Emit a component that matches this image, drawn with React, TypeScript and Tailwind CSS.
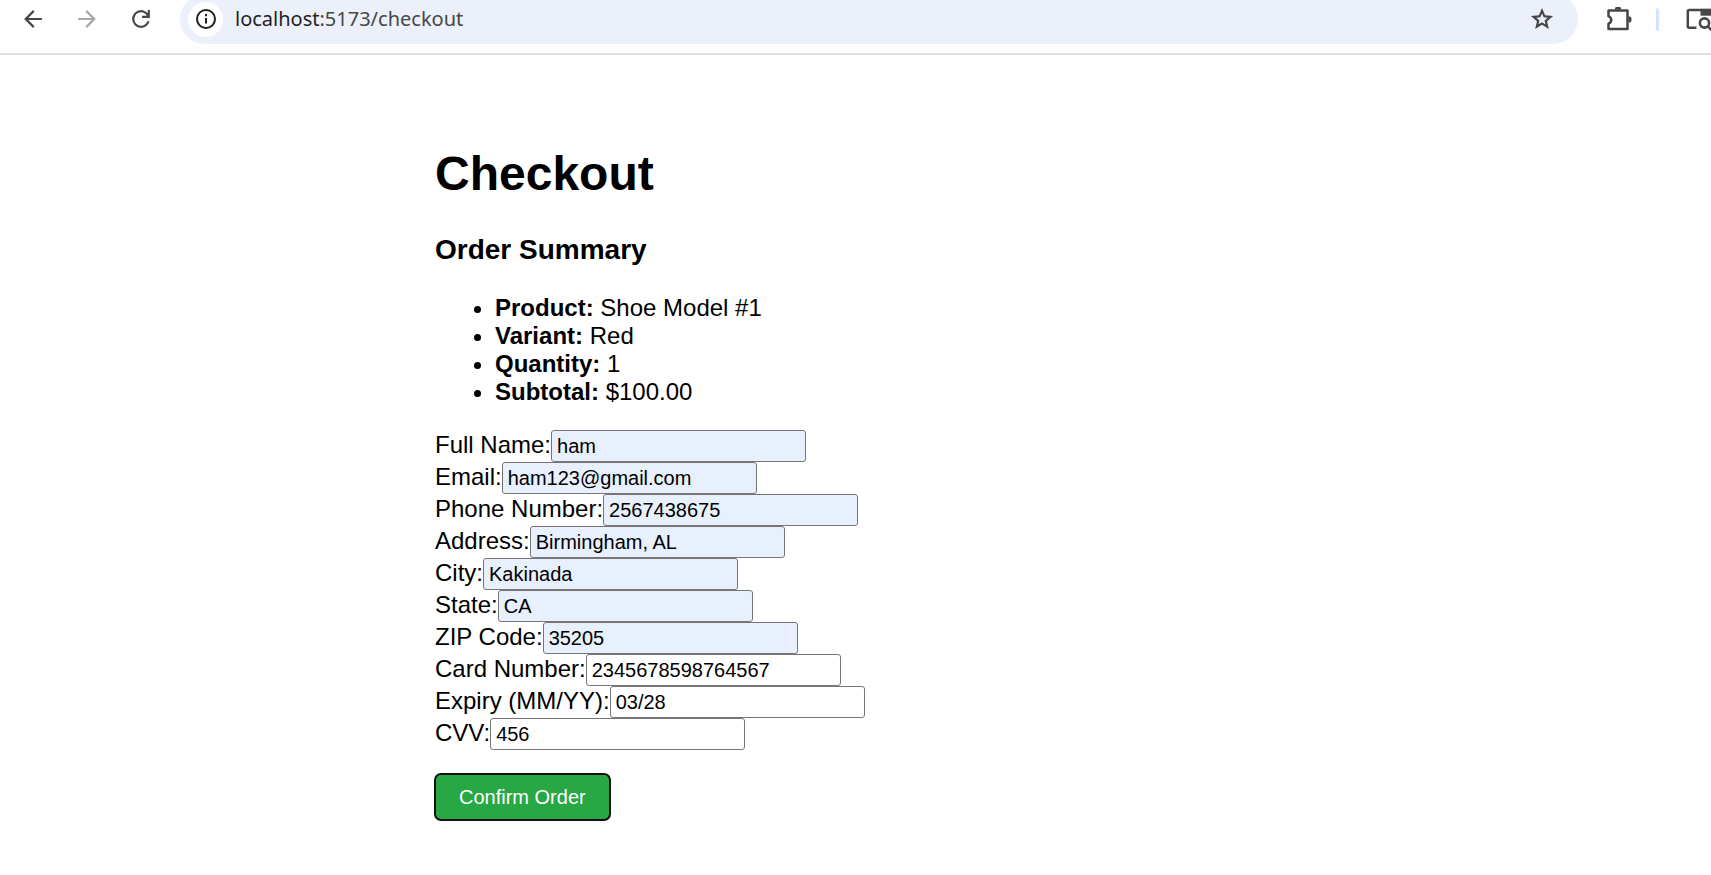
import { useState, type ReactNode } from "react";

type Field = {
  id: string;
  label: string;
  value: string;
  type?: string;
  autofilled?: boolean;
};

const summary = [
  { label: "Product:", value: "Shoe Model #1" },
  { label: "Variant:", value: "Red" },
  { label: "Quantity:", value: "1" },
  { label: "Subtotal:", value: "$100.00" },
];

const fields: Field[] = [
  { id: "fullName", label: "Full Name:", value: "ham", autofilled: true },
  { id: "email", label: "Email:", value: "ham123@gmail.com", type: "email", autofilled: true },
  { id: "phone", label: "Phone Number:", value: "2567438675", type: "tel", autofilled: true },
  { id: "address", label: "Address:", value: "Birmingham, AL", autofilled: true },
  { id: "city", label: "City:", value: "Kakinada", autofilled: true },
  { id: "state", label: "State:", value: "CA", autofilled: true },
  { id: "zip", label: "ZIP Code:", value: "35205", autofilled: true },
  { id: "card", label: "Card Number:", value: "2345678598764567" },
  { id: "expiry", label: "Expiry (MM/YY):", value: "03/28" },
  { id: "cvv", label: "CVV:", value: "456" },
];

function IconButton({ label, children }: { label: string; children: ReactNode }) {
  return (
    <button type="button" aria-label={label} className="flex h-6 min-w-6 shrink-0 items-center justify-center">
      {children}
    </button>
  );
}

function Glyph({ d }: { d: string }) {
  return (
    <svg width="24" height="24" viewBox="1.2 1.2 21.6 21.6" fill="currentColor">
      <path d={d} />
    </svg>
  );
}

function BrowserBar() {
  return (
    <header className="flex h-[55px] items-end overflow-hidden border-b-2 border-[#e1e1e1] bg-white pb-[9px] font-['Noto_Sans','Open_Sans',sans-serif]">
      <div className="flex h-[50px] w-full items-center">
        <nav aria-label="Browser" className="flex w-[180px] shrink-0 items-center gap-[30px] pl-[21px] text-[#474747]">
          <IconButton label="Back">
            <Glyph d="M20 11H7.830l5.590-5.590L12 4l-8 8 8 8 1.410-1.410L7.830 13H20z" />
          </IconButton>
          <span className="flex text-[#a9a9a9]">
            <IconButton label="Forward">
              <Glyph d="M4 11h12.170l-5.590-5.590L12 4l8 8-8 8-1.410-1.410L16.170 13H4z" />
            </IconButton>
          </span>
          <IconButton label="Reload">
            <Glyph d="M12 20q-3.350 0-5.675-2.325T4 12t2.325-5.675T12 4q1.725 0 3.300.713T18 6.750V4h2v7h-7V9h4.200q-.8-1.400-2.187-2.200T12 6Q9.500 6 7.750 7.750T6 12t1.750 4.250T12 18q1.925 0 3.475-1.100T17.650 14h2.100q-.7 2.650-2.850 4.325T12 20" />
          </IconButton>
        </nav>

        <div className="flex h-[50px] min-w-0 flex-1 items-center rounded-full bg-[#ebf0fa] pr-6 pl-2">
          <button
            type="button"
            aria-label="View site information"
            className="flex size-[35px] shrink-0 items-center justify-center rounded-full bg-white text-[#1f1f1f]"
          >
            <svg width="22" height="22" viewBox="0 0 22 22" fill="none" stroke="currentColor" strokeWidth="2">
              <circle cx="11" cy="11" r="9" />
              <path d="M11 10v5.500M11 6v2.200" />
            </svg>
          </button>
          <a href="/checkout" className="ml-3 flex-1 truncate text-xl text-[#474747]">
            <span className="text-[#1f1f1f]">localhost</span>:5173/checkout
          </a>
          <IconButton label="Bookmark this tab">
            <span className="text-[#474747]">
              <Glyph d="m8.850 16.825 3.150-1.900 3.150 1.925-.825-3.600 2.775-2.400-3.650-.325-1.450-3.400-1.450 3.375-3.650.325 2.775 2.425zM5.825 21l1.625-7.025L2 9.250l7.200-.625L12 2l2.800 6.625 7.200.625-5.450 4.725L18.175 21 12 17.275z" />
            </span>
          </IconButton>
        </div>

        <div className="flex w-[133px] shrink-0 items-center overflow-hidden pl-7 text-[#474747]">
          <IconButton label="Extensions">
            <svg width="26" height="26" viewBox="0 0 26 26" className="shrink-0">
              <path
                d="M2.500 4.500h19v18.400h-19v-5.200c3.600-1.600 3.600-5.900 0-7.500z"
                fill="none"
                stroke="currentColor"
                strokeWidth="2.500"
                strokeLinejoin="round"
              />
              <path d="M8.800 3.600a3.200 3.200 0 0 1 6.400 0zM22.400 10.300a3.200 3.200 0 0 1 0 6.400z" fill="currentColor" />
            </svg>
          </IconButton>
          <span className="ml-6 h-[23px] w-[3px] shrink-0 rounded-full bg-[#d3e3fd]" />
          <span className="ml-[27px] flex">
            <IconButton label="Search tabs">
              <svg width="28" height="24" viewBox="0 0 28 24" fill="none" stroke="currentColor" className="shrink-0">
                <path d="M10.500 20.800H3.300a1.500 1.500 0 0 1-1.500-1.500V4.500A1.500 1.500 0 0 1 3.300 3H26" strokeWidth="2.500" />
                <path d="M14.500 1.900H28v6.800H14.500z" fill="currentColor" stroke="none" />
                <circle cx="18.500" cy="16" r="4.600" strokeWidth="2.600" />
                <path d="m21.900 19.400 5 5" strokeWidth="2.600" />
              </svg>
            </IconButton>
          </span>
        </div>
      </div>
    </header>
  );
}

export default function App() {
  const [values, setValues] = useState<Record<string, string>>(
    Object.fromEntries(fields.map((f) => [f.id, f.value])),
  );

  return (
    <div className="min-h-screen bg-white text-black">
      <BrowserBar />
      <main className="mx-auto w-full max-w-[901px] px-[30px] pt-[91px] pb-[30px] font-['Liberation_Sans',Arial,sans-serif] text-2xl leading-7">
        <h1 className="text-5xl leading-[56px] font-bold">Checkout</h1>
        <h3 className="mt-8 text-[28px] leading-8 font-bold">Order Summary</h3>
        <ul className="mt-7 list-disc pl-[60px]">
          {summary.map((item) => (
            <li key={item.label}>
              <strong>{item.label}</strong> {item.value}
            </li>
          ))}
        </ul>

        <form className="mt-6" onSubmit={(e) => e.preventDefault()}>
          {fields.map((f) => (
            <div key={f.id} className="flex h-8 items-start">
              <label htmlFor={f.id} className="leading-[30px] whitespace-nowrap">
                {f.label}
              </label>
              <input
                id={f.id}
                type={f.type ?? "text"}
                value={values[f.id]}
                onChange={(e) => setValues({ ...values, [f.id]: e.target.value })}
                className={`h-8 w-[255px] rounded-[3px] border border-[#767676] px-[5px] text-xl ${
                  f.autofilled ? "bg-[#e8f0fe]" : "bg-white"
                }`}
              />
            </div>
          ))}
          <button
            type="submit"
            className="mt-6 h-[46px] rounded-md bg-[#28a745] px-6 text-xl text-white outline-2 -outline-offset-1 outline-[#101010]"
          >
            Confirm Order
          </button>
        </form>
      </main>
    </div>
  );
}
